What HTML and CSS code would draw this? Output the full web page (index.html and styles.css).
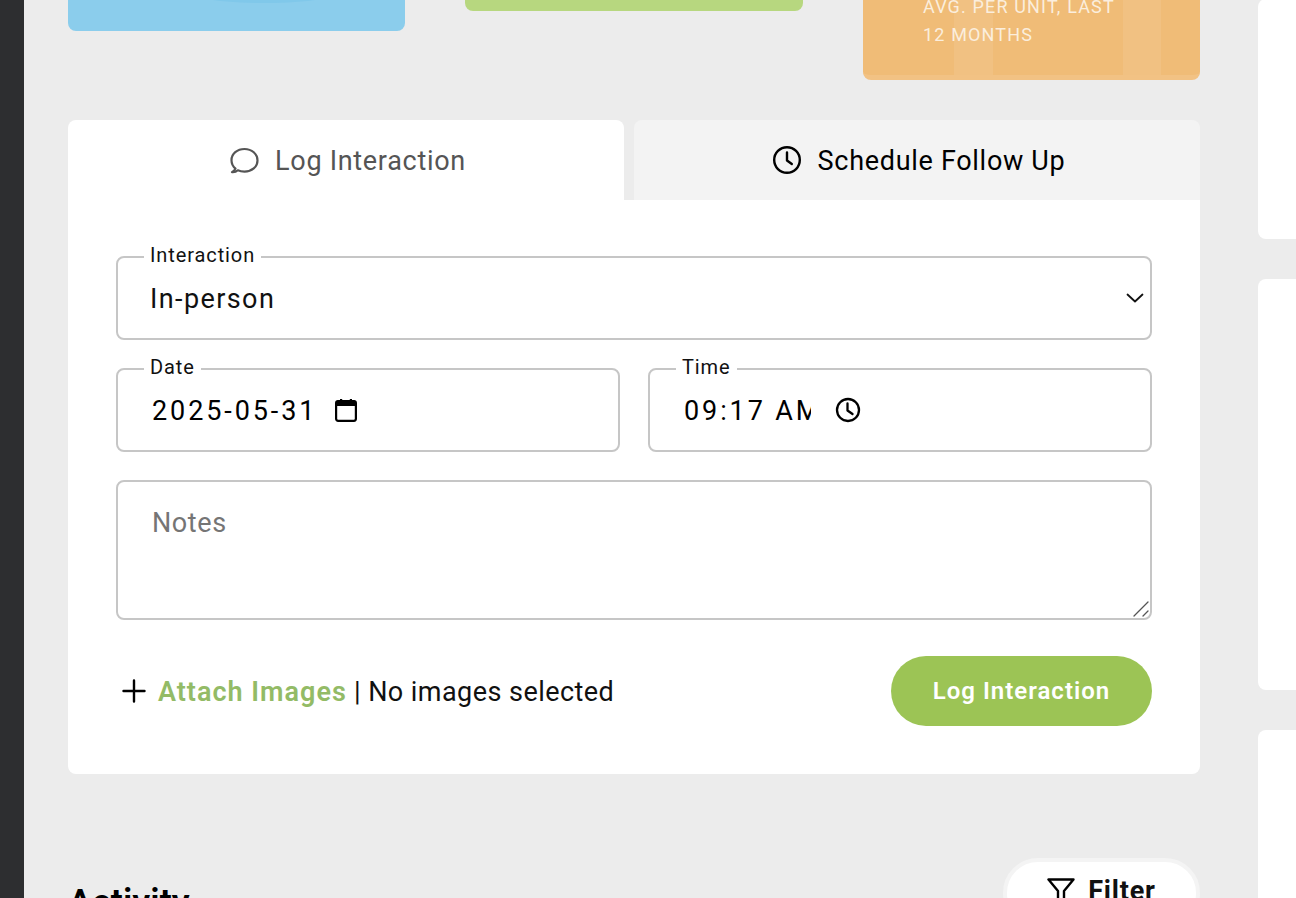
FILE: index.html
```html
<!DOCTYPE html>
<html lang="en">
<head>
<meta charset="utf-8">
<title>Log Interaction</title>
<link rel="stylesheet" href="styles.css">
</head>
<body>
<div class="app">
  <aside class="sidebar"></aside>
  <main class="main">
    <section class="stats">
      <div class="stat stat-blue"><div class="blob"></div></div>
      <div class="stat stat-green"></div>
      <div class="stat stat-orange">
        <div class="stripe stripe-a"></div>
        <div class="stripe stripe-b"></div>
        <div class="stat-caption">AVG. PER UNIT, LAST<br>12 MONTHS</div>
      </div>
    </section>

    <section class="composer">
      <div class="tabs">
        <div class="tab tab-active">
          <svg class="tab-icon" viewBox="0 0 29 27" width="29" height="27" fill="none" stroke="#555" stroke-width="2.2" stroke-linejoin="round" stroke-linecap="round"><path d="M2 25.200c2.600.2 4.600-.7 5.800-1.900 2 .9 4.200 1.300 6.700 1.300 7.300 0 13-4.700 13-11.200S21.800 2 14.500 2 1.500 6.700 1.500 13.200c0 3.300 1.500 6.300 4 8.300-.5 1.400-1.900 2.700-3.500 3.700z"/></svg>
          <span>Log Interaction</span>
        </div>
        <div class="tab tab-idle">
          <svg class="tab-icon" viewBox="0 0 30 30" width="30" height="30" fill="none" stroke="#000" stroke-width="2.4" stroke-linecap="round" stroke-linejoin="round"><circle cx="15" cy="15" r="12.800"/><path d="M15 7.500V15.500l4.800 3.500"/></svg>
          <span>Schedule Follow Up</span>
        </div>
      </div>
      <form class="panel">
        <fieldset class="field">
          <legend>Interaction</legend>
          <div class="value value-select">
            <span class="select-text">In-person</span>
            <svg class="chevron" viewBox="0 0 18 10" width="18" height="10" fill="none" stroke="#111" stroke-width="1.800" stroke-linecap="round" stroke-linejoin="round"><path d="M1.500 1.500 9 8.500l7.500-7"/></svg>
          </div>
        </fieldset>
        <div class="field-row">
          <fieldset class="field">
            <legend>Date</legend>
            <div class="value value-temporal">
              <span class="date-text">2025-05-31</span>
              <svg viewBox="0 0 24 24" width="24" height="24" fill="none"><path fill="#000" d="M6 1h2.200v3H6zM15.800 1H18v3h-2.200z"/><path fill="#000" d="M3 3.500C3 2.700 3.700 2 4.500 2h15c.8 0 1.500.7 1.500 1.500V8H3z"/><rect x="2.100" y="3" width="19.800" height="19.800" rx="2" stroke="#000" stroke-width="2.200"/></svg>
            </div>
          </fieldset>
          <fieldset class="field">
            <legend>Time</legend>
            <div class="value value-temporal">
              <span class="time-text">09:17 AM</span>
              <svg viewBox="0 0 26 26" width="26" height="26" fill="none" stroke="#000" stroke-width="2.300" stroke-linecap="round" stroke-linejoin="round"><circle cx="13" cy="13" r="11"/><path d="M12.500 6.500V13.500l5 3.500"/></svg>
            </div>
          </fieldset>
        </div>
        <div class="notes-wrap">
          <textarea class="notes" placeholder="Notes"></textarea>
          <svg class="grip" viewBox="0 0 16 16" width="16" height="16" fill="none" stroke="#555" stroke-width="1.300" stroke-linecap="round"><path d="M1 15 15 1M10 15l5-5"/></svg>
        </div>
        <div class="form-foot">
          <div class="attach">
            <svg viewBox="0 0 24 24" width="24" height="24" fill="none" stroke="#000" stroke-width="2.400" stroke-linecap="round"><path d="M12 1.500v21M1.500 12h21"/></svg>
            <span class="attach-line"><strong class="attach-link">Attach Images</strong> | No images selected</span>
          </div>
          <button class="submit" type="button">Log Interaction</button>
        </div>
      </form>
    </section>

    <section class="activity-head">
      <h2 class="activity-title">Activity</h2>
      <button class="filter" type="button">
        <svg viewBox="0 0 28 28" width="28" height="28" fill="none" stroke="#000" stroke-width="2.400" stroke-linejoin="round"><path d="M1.500 2.500h25L17 14v11l-6-2.500V14z"/></svg>
        <span>Filter</span>
      </button>
    </section>
  </main>
  <aside class="rail">
    <div class="rail-card rail-first"></div>
    <div class="rail-card rail-second"></div>
    <div class="rail-card rail-third"></div>
  </aside>
</div>
</body>
</html>
```

FILE: styles.css
```css
* { box-sizing: border-box; }
html, body { margin: 0; height: 100%; overflow: hidden; }
body {
  font-family: "Roboto", "Noto Sans", "Liberation Sans", sans-serif;
  color: #000;
  background: #ececec;
}
.app { display: flex; height: 898px; overflow: hidden; }
.sidebar { width: 24px; flex: none; background: #2d2e30; }
.main { width: 1234px; flex: none; padding-left: 44px; padding-right: 58px; }

.stats { display: flex; align-items: flex-start; height: 80px; margin-bottom: 40px; }
.stat { width: 337px; overflow: hidden; border-radius: 0 0 8px 8px; position: relative; }
.stat-blue { height: 31px; background: #8bcdec; }
.blob { position: absolute; left: 134px; top: -11px; width: 124px; height: 14px; border-radius: 50%; background: #80c8ea; }
.stat-green { height: 11px; margin-left: 60px; width: 338px; background: #b7d77f; }
.stat-orange { height: 80px; margin-left: 60px; background: #f0bc77; border-bottom: 5px solid #f2c284; }
.stripe { position: absolute; top: 0; bottom: 0; background: #f1c182; }
.stripe-a { left: 91px; width: 39px; }
.stripe-b { left: 260px; width: 38px; }
.stat-caption {
  position: absolute; left: 60px; top: -7px;
  font-size: 18px; line-height: 28px; letter-spacing: 1.15px; color: #fbeedd; white-space: nowrap;
}

.composer { width: 1132px; }
.tabs { display: flex; gap: 10px; height: 80px; }
.tab {
  display: flex; align-items: center; justify-content: center; gap: 16px;
  border-radius: 8px 8px 0 0; font-size: 27px; letter-spacing: .7px;
}
.tab span { padding-top: 2px; }
.tab-active { width: 556px; padding-left: 4px; background: #fff; color: #555; }
.tab-idle { width: 566px; padding-left: 3px; background: #f3f3f3; color: #000; }
.panel {
  background: #fff; height: 574px; padding: 56px 48px 0;
  border-radius: 0 0 8px 8px;
}
.field {
  display: block; margin: 0; padding: 0 32px; min-width: 0;
  border: 2px solid #c6c6c6; border-radius: 8px; height: 84px; flex: 1;
  position: relative;
}
.field legend { padding: 0 6px; font-size: 20px; line-height: 0; height: 2px; margin-left: -6px; color: #111; letter-spacing: .9px; transform: translateY(-1px); }
.value { display: flex; align-items: center; height: 80px; font-size: 27px; }
.value span { padding-top: 2px; }
.value-select { justify-content: space-between; margin-right: -26px; color: #111; }
.select-text { letter-spacing: 1.4px; }
.value-temporal { margin-left: 2px; }
.date-text { letter-spacing: 2.9px; margin-right: 17px; }
.time-text { width: 127px; overflow: hidden; white-space: nowrap; letter-spacing: 2.9px; margin-right: 24px; }
.field-row { display: flex; gap: 28px; margin-top: 28px; }
.notes-wrap { position: relative; margin-top: 28px; height: 140px; }
.notes {
  display: block; width: 100%; height: 140px; padding: 25px 34px 0;
  border: 2px solid #c6c6c6; border-radius: 8px; outline: none;
  font: 27px "Roboto", sans-serif; letter-spacing: .6px; resize: none; background: #fff;
}
.notes::placeholder { color: #757575; }
.grip { position: absolute; right: 3px; bottom: 3px; }
.form-foot { display: flex; align-items: center; justify-content: space-between; margin-top: 36px; height: 70px; }
.attach { display: flex; align-items: center; gap: 12px; padding-left: 6px; font-size: 27px; color: #111; letter-spacing: .45px; }
.attach-line { padding-top: 2px; }
.attach-link { color: #93bb66; font-weight: 600; letter-spacing: 1px; }
.submit {
  width: 261px; height: 70px; border: 0; border-radius: 35px;
  background: #9cc455; color: #fff; font: 600 24px "Roboto", sans-serif; letter-spacing: 1px;
}

.activity-head { display: flex; justify-content: space-between; align-items: flex-start; width: 1132px; margin-top: 84px; }
.activity-title { margin: 23px 0 0; font-size: 36px; font-weight: 600; line-height: 44px; }
.filter {
  display: flex; align-items: center; justify-content: center; gap: 13px;
  width: 197px; height: 70px; padding-bottom: 5px; border: 4px solid #f4f4f4; border-radius: 35px;
  background: #fff; font: 700 27px "Roboto", sans-serif; color: #111; letter-spacing: .8px;
}

.rail { flex: 1; display: flex; flex-direction: column; gap: 40px; margin-top: -1px; }
.rail-card { background: #fff; border-radius: 8px 0 0 8px; flex: none; }
.rail-first { height: 240px; }
.rail-second { height: 411px; }
.rail-third { height: 300px; }
```
